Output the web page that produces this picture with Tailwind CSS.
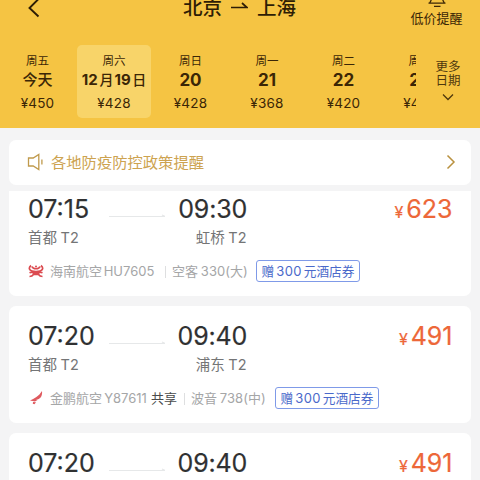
<!DOCTYPE html>
<html lang="zh-CN">
<head>
<meta charset="utf-8">
<title>北京 - 上海</title>
<script src="https://cdn.jsdelivr.net/npm/@tailwindcss/browser@4"></script>
</head>
<body class="w-[480px] h-[480px] overflow-hidden bg-[#f4f4f5] font-['Inter','Noto_Sans_CJK_SC',sans-serif] whitespace-nowrap flex flex-col">
<header class="h-[128px] shrink-0 bg-[#f5c443] text-[#3b2606] overflow-hidden flex flex-col">
  <div class="h-[45px] shrink-0 flex">
    <div class="w-[183px] pl-[27px]">
      <svg class="w-[14px] h-[18px]" viewBox="0 0 14 18" fill="none" stroke="#2e1d05" stroke-width="1.9"><path d="M11.5-1 2.5 8l9 8.500"/></svg>
    </div>
    <div class="w-[222px] flex items-start text-[19.500px] leading-[28px] font-medium text-[#2e1d05]">
      <span class="-mt-[6px] w-[48px]">北京</span>
      <svg class="w-[17px] h-[14px]" viewBox="0 0 17 14" fill="none" stroke="#2e1d05" stroke-width="1.700"><path d="M0 7.500h16L11 3"/></svg>
      <span class="-mt-[6px] ml-[9px]">上海</span>
    </div>
    <div class="w-[63px] flex flex-col items-center">
      <svg class="w-[20px] h-[8px]" viewBox="0 0 20 8" fill="none" stroke="#3b2606" stroke-width="1.300"><path d="M4-2v2.500L2.500 3.200M16-2v2.500l1.500 2.700M1.500 3.200h17M7 6.400h6.500"/></svg>
      <span class="text-[13px] leading-[20px]">低价提醒</span>
    </div>
  </div>
  <div class="flex h-[73px] shrink-0">
    <div class="w-[416px] overflow-hidden flex gap-[2.500px] pl-[0.500px]">
      <div class="w-[74px] shrink-0 flex flex-col items-center pt-[6px]"><span class="text-[11.500px] leading-[20px]">周五</span><span class="text-[15px] leading-[18px] font-medium">今天</span><span class="text-[13.500px] leading-[28px] tracking-[0.200px]">¥450</span></div>
      <div class="w-[74px] shrink-0 flex flex-col items-center pt-[6px] rounded-[5px] bg-[#f8d469]"><span class="text-[11.500px] leading-[20px]">周六</span><span class="text-[15px] leading-[18px] font-bold">12<span class="text-[14px] font-medium ml-[2px] mr-px">月</span>19<span class="text-[14px] font-medium ml-[1.500px]">日</span></span><span class="text-[13.500px] leading-[28px] tracking-[0.200px]">¥428</span></div>
      <div class="w-[74px] shrink-0 flex flex-col items-center pt-[6px]"><span class="text-[11.500px] leading-[20px]">周日</span><span class="text-[17px] leading-[19px] -mb-px font-bold">20</span><span class="text-[13.500px] leading-[28px] tracking-[0.200px]">¥428</span></div>
      <div class="w-[74px] shrink-0 flex flex-col items-center pt-[6px]"><span class="text-[11.500px] leading-[20px]">周一</span><span class="text-[17px] leading-[19px] -mb-px font-bold">21</span><span class="text-[13.500px] leading-[28px] tracking-[0.200px]">¥368</span></div>
      <div class="w-[74px] shrink-0 flex flex-col items-center pt-[6px]"><span class="text-[11.500px] leading-[20px]">周二</span><span class="text-[17px] leading-[19px] -mb-px font-bold">22</span><span class="text-[13.500px] leading-[28px] tracking-[0.200px]">¥420</span></div>
      <div class="w-[74px] shrink-0 flex flex-col items-center pt-[6px]"><span class="text-[11.500px] leading-[20px]">周三</span><span class="text-[17px] leading-[19px] -mb-px font-bold">23</span><span class="text-[13.500px] leading-[28px] tracking-[0.200px]">¥450</span></div>
    </div>
    <div class="w-[64px] flex flex-col items-center pt-[15px] text-[12.500px] leading-[13.500px] text-[#4f380d]">
      <span>更多</span><span>日期</span>
      <svg class="w-[12px] h-[8px] mt-[6px]" viewBox="0 0 12 8" fill="none" stroke="#4f380d" stroke-width="1.300"><path d="M1 1.500l5 5 5-5"/></svg>
    </div>
  </div>
</header>
<main class="flex-1 min-h-0 flex flex-col px-[9px] pt-[11.500px]">
  <div class="h-[45.500px] shrink-0 rounded-[7px] bg-white flex items-center pl-[18px] pr-[15px]">
    <svg class="w-[17px] h-[18px]" viewBox="0 0 17 18" fill="none" stroke="#c09a4c" stroke-width="1.300"><path d="M1.500 5h4.700l5.600-3.500v15L6.200 13H1.500zM14.900 6.500v5"/></svg>
    <span class="ml-[7px] text-[15.300px] leading-[22px] text-[#cda350] translate-y-px">各地防疫防控政策提醒</span>
    <svg class="w-[10px] h-[16px] ml-auto" viewBox="0 0 10 16" fill="none" stroke="#b9913f" stroke-width="1.500"><path d="M1.500 1.500 8 8l-6.500 6.500"/></svg>
  </div>
  <div class="mt-[5.500px] flex-1 min-h-0 overflow-hidden">
    <div class="-mt-[12px] flex flex-col gap-[9.500px]">
      <article class="h-[117.500px] shrink-0 rounded-[7px] bg-white px-[19px] pt-[14px]">
        <div class="h-[32px] flex items-center text-[25px] leading-[32px] text-[#303132] [-webkit-text-stroke:0.2px_currentColor]">
          <span class="w-[81px]">07:15</span>
          <svg class="w-[56px] h-[16px] translate-y-[7px]" viewBox="0 0 56 16" fill="none" stroke="#e6e8e9" stroke-width="1.200"><path d="M0 8.500h56l-3-1.500"/></svg>
          <span class="w-[82px] text-right -tracking-[0.200px]">09:30</span>
          <span class="ml-auto flex items-baseline text-[#ed6738] gap-[3px] -mr-[0.500px]"><span class="text-[16px] leading-[20px]">¥</span><span>623</span></span>
        </div>
        <div class="h-[24px] mt-px flex justify-between w-[218.500px] text-[14.500px] leading-[24px] text-[#747576] [word-spacing:-0.500px]"><span>首都 T2</span><span>虹桥 T2</span></div>
        <div class="h-[22px] mt-[10px] flex items-center text-[13px] text-[#a5a6a7]">
          <svg class="w-[16px] h-[14px] mr-[6px]" viewBox="0 0 16 14" fill="none" stroke="#db4b50" stroke-width="1.700"><path d="M3 1.500C0 4 1 7.500 8 7.500s8-3.500 5-6M4 2.500c1 3 7 3 8 0M1.500 8.800c3-1.300 10-1.300 13 0M1.500 12.500c2 0 3-.5 4-2h5c1 1.500 2 2 4 2M4.500 9.500h7"/><circle cx="8" cy="2.400" r="1" fill="#db4b50" stroke="none"/></svg>
          <span class="w-[115px] translate-y-px [word-spacing:-2px]">海南航空 HU7605</span>
          <span class="w-px h-[12px] translate-y-px bg-[#dedfe0] mr-[6px]"></span>
          <span class="w-[84px] translate-y-px tracking-[0.050px] [word-spacing:-1px]">空客 330(大)</span>
          <span class="h-[22px] w-[104px] rounded-[3px] border border-[#7f9ae8] text-[#4a69ca] flex items-center justify-center"><span class="translate-y-px [word-spacing:-1.500px] text-[12.700px]">赠 <span class="tracking-[0.300px] text-[13px]">300</span> 元酒店券</span></span>
        </div>
      </article>
      <article class="h-[117.500px] shrink-0 rounded-[7px] bg-white px-[19px] pt-[14px]">
        <div class="h-[32px] flex items-center text-[25px] leading-[32px] text-[#303132] [-webkit-text-stroke:0.2px_currentColor]">
          <span class="w-[81px]">07:20</span>
          <svg class="w-[56px] h-[16px] translate-y-[7px]" viewBox="0 0 56 16" fill="none" stroke="#e6e8e9" stroke-width="1.200"><path d="M0 8.500h56l-3-1.500"/></svg>
          <span class="w-[82px] text-right -tracking-[0.200px]">09:40</span>
          <span class="ml-auto flex items-baseline text-[#ed6738] gap-[3px] -mr-[0.500px]"><span class="text-[16px] leading-[20px]">¥</span><span>491</span></span>
        </div>
        <div class="h-[24px] mt-px flex justify-between w-[218.500px] text-[14.500px] leading-[24px] text-[#747576] [word-spacing:-0.500px]"><span>首都 T2</span><span>浦东 T2</span></div>
        <div class="h-[22px] mt-[10px] flex items-center text-[13px] text-[#a5a6a7]">
          <svg class="w-[16px] h-[14px] mr-[6px]" viewBox="0 0 16 14" fill="#df5a5f"><path d="M14 0c.5 4-1 7.500-4.500 8.500C7 9 5 8.500 2 9.500 6 8 11 5 14 0zM2 9.500c3-1.500 6-1 7.500-.5L7 10.500zM5 11l3 .3-1.500 2-1.700-.5z"/></svg>
          <span class="w-[101px] translate-y-px [word-spacing:-1.500px]">金鹏航空 Y87611</span>
          <span class="w-[33px] translate-y-px text-[#4a4b4c]">共享</span>
          <span class="w-px h-[12px] translate-y-px bg-[#dedfe0] mr-[6px]"></span>
          <span class="w-[84px] translate-y-px tracking-[0.050px] [word-spacing:-1px]">波音 738(中)</span>
          <span class="h-[22px] w-[104px] rounded-[3px] border border-[#7f9ae8] text-[#4a69ca] flex items-center justify-center"><span class="translate-y-px [word-spacing:-1.500px] text-[12.700px]">赠 <span class="tracking-[0.300px] text-[13px]">300</span> 元酒店券</span></span>
        </div>
      </article>
      <article class="h-[117.500px] shrink-0 rounded-[7px] bg-white px-[19px] pt-[14px]">
        <div class="h-[32px] flex items-center text-[25px] leading-[32px] text-[#303132] [-webkit-text-stroke:0.2px_currentColor]">
          <span class="w-[81px]">07:20</span>
          <svg class="w-[56px] h-[16px] translate-y-[7px]" viewBox="0 0 56 16" fill="none" stroke="#e6e8e9" stroke-width="1.200"><path d="M0 8.500h56l-3-1.500"/></svg>
          <span class="w-[82px] text-right -tracking-[0.200px]">09:40</span>
          <span class="ml-auto flex items-baseline text-[#ed6738] gap-[3px] -mr-[0.500px]"><span class="text-[16px] leading-[20px]">¥</span><span>491</span></span>
        </div>
      </article>
    </div>
  </div>
</main>
</body>
</html>
